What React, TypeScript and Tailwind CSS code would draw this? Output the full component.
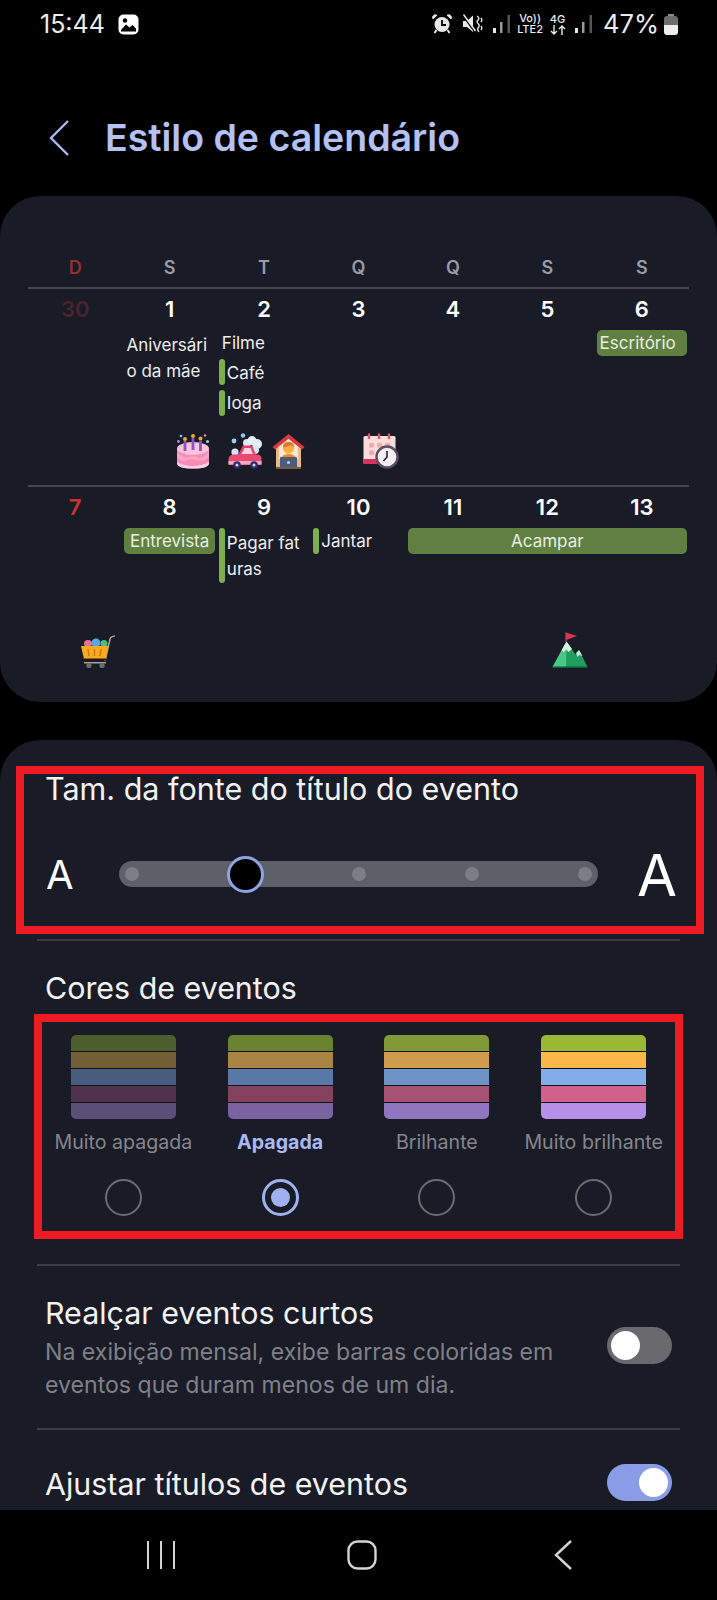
import React from "react";

function ImageIcon() {
  return (
    <svg width="21" height="21" viewBox="0 0 21 21">
      <rect x="0.5" y="0.5" width="20" height="20" rx="5" fill="#fff" />
      <path d="M3 16 L8 10.5 L11.5 13.5 L14.5 11 L18 14.5 V17.5 H3 Z" fill="#000" />
      <circle cx="7" cy="6.5" r="2.2" fill="#000" />
    </svg>
  );
}
function AlarmIcon() {
  return (
    <svg width="20" height="20" viewBox="0 0 20 20">
      <circle cx="10" cy="10.5" r="7.5" fill="#e8e8e8" />
      <path d="M10 6 V11 H14" stroke="#000" strokeWidth="1.8" fill="none" />
      <path d="M1 5 L5 1.2 L2.6 0.8 L0.6 2.6 Z M19 5 L15 1.2 L17.4 0.8 L19.4 2.6 Z" fill="#e8e8e8" stroke="#e8e8e8" />
      <path d="M4.5 16 L2.5 19 M15.5 16 L17.5 19" stroke="#e8e8e8" strokeWidth="2" />
    </svg>
  );
}
function MuteIcon() {
  return (
    <svg width="21" height="20" viewBox="0 0 21 20">
      <path d="M1 7 H5 L11 1.5 V18 L5 13 H1 Z" fill="#e8e8e8" />
      <path d="M1 1.5 L13 18" stroke="#000" strokeWidth="2" />
      <path d="M1.5 0.5 L13.5 17" stroke="#e8e8e8" strokeWidth="1.5" />
      <path d="M15 2 Q18 4 16 6 Q14 8 16.5 10 Q18 12 16 14 Q15 16 17 18 M19 4 Q20.5 6 19 8 M19 12 Q20.5 14 19 16" stroke="#e8e8e8" strokeWidth="1.4" fill="none" />
    </svg>
  );
}
function SignalIcon() {
  return (
    <svg width="18" height="20" viewBox="0 0 18 20">
      <rect x="0" y="14" width="3" height="5" fill="#e8e8e8" />
      <rect x="7" y="8" width="2.5" height="11" fill="#9a9a9a" />
      <rect x="14.5" y="1" width="2.5" height="18" fill="#555" />
    </svg>
  );
}
function ArrowsIcon() {
  return (
    <svg width="16" height="10" viewBox="0 0 16 10">
      <path d="M4 0 V9 M1 6 L4 9 L7 6 M12 10 V1 M9 4 L12 1 L15 4" stroke="#e8e8e8" strokeWidth="1.4" fill="none" />
    </svg>
  );
}
function BatteryIcon() {
  return (
    <svg width="14" height="21" viewBox="0 0 14 21">
      <rect x="4" y="0" width="6" height="3" fill="#8a8a8a" />
      <path d="M0 5 Q0 2 3 2 H11 Q14 2 14 5 V11 H0 Z" fill="#6d6d6d" />
      <path d="M0 11 H14 V18 Q14 21 11 21 H3 Q0 21 0 18 Z" fill="#eee" />
    </svg>
  );
}

function CakeEmoji() {
  return (
    <svg width="34" height="36" viewBox="0 0 34 36">
      <circle cx="9" cy="6" r="2" fill="#f5a623" />
      <circle cx="17" cy="3" r="2" fill="#f5a623" />
      <circle cx="24.5" cy="5.5" r="2" fill="#f5a623" />
      <circle cx="2.5" cy="8.5" r="1.4" fill="#a98be0" />
      <circle cx="31.5" cy="8.5" r="1.6" fill="#8fc6f0" />
      <circle cx="5" cy="3" r="1.3" fill="#8fc6f0" />
      <circle cx="29" cy="2.5" r="1.2" fill="#e58fc0" />
      <path d="M1 16 V30 Q1 35.5 17 35.5 Q33 35.5 33 30 V16 Z" fill="#f78cb6" />
      <ellipse cx="17" cy="15.5" rx="16" ry="6.5" fill="#fbc3d9" />
      <path d="M1 17 Q1 22 6 22.5 Q9 26 13 24 Q19 22 23 25 Q29 26 33 17 V24 Q27 29 21 27 Q14 25 9 28 Q4 28 1 24 Z" fill="#fba6c9" />
      <path d="M1 29 Q8 33 17 33 Q26 33 33 29 V30 Q33 35.5 17 35.5 Q1 35.5 1 30 Z" fill="#fcd2e2" />
      <path d="M9 8 V18 M17 5 V17 M24.5 7.5 V18" stroke="#8456c8" strokeWidth="2.8" />
    </svg>
  );
}
function CarEmoji() {
  return (
    <svg width="34" height="36" viewBox="0 0 34 36">
      <circle cx="6" cy="8" r="2.4" fill="#9ccbf0" />
      <circle cx="15" cy="2.5" r="2.2" fill="#8fc6f0" />
      <circle cx="19" cy="10" r="4" fill="#dbe8f6" />
      <circle cx="24" cy="7.5" r="4.5" fill="#e8eff7" />
      <circle cx="29" cy="11" r="5" fill="#e2ebf6" />
      <circle cx="27" cy="17" r="4" fill="#d6e6f5" />
      <circle cx="7" cy="19" r="3.6" fill="#d6e6f5" />
      <path d="M10 22 L15 12.5 H24 L28 22 Z" fill="#e6406a" />
      <path d="M13.5 21 L16.5 15 H22.5 L25 21 Z" fill="#f7d5df" />
      <path d="M0.5 32 V26 Q1 22 5 21.5 H30 Q33.5 22 33.5 26 V32 Z" fill="#ea4a72" />
      <rect x="0.5" y="28" width="33" height="3.5" fill="#f7a8bd" />
      <circle cx="9" cy="32" r="3.8" fill="#2d2f6e" />
      <circle cx="26" cy="32" r="3.8" fill="#2d2f6e" />
      <circle cx="9" cy="32" r="1.5" fill="#cfd2ea" />
      <circle cx="26" cy="32" r="1.5" fill="#cfd2ea" />
    </svg>
  );
}
function HouseEmoji() {
  return (
    <svg width="33" height="36" viewBox="0 0 33 36">
      <rect x="4" y="12" width="25" height="23" fill="#e9b989" />
      <path d="M7 13 L16.5 5.5 L26 13 V26 H7 Z" fill="#fbe6cf" />
      <path d="M0.5 14 L16.5 1 L32.5 14 L30 16.5 L16.5 5.5 L3 16.5 Z" fill="#d8393f" />
      <circle cx="16.5" cy="15" r="5.5" fill="#f6b042" />
      <path d="M11 14.5 Q11 8.5 17 9 Q22.5 9 22 14.5 L19.5 12 Q15 13.5 11 14.5 Z" fill="#e4742a" />
      <path d="M8.5 26 Q10.5 21 16.5 21 Q22.5 21 24.5 26 Z" fill="#ef8b2f" />
      <rect x="8" y="24" width="17" height="11" rx="1" fill="#4c5c7c" />
      <rect x="4" y="34" width="25" height="2" fill="#7c5a3c" />
      <circle cx="16.5" cy="29.5" r="1.6" fill="#c5cde0" />
    </svg>
  );
}
function CalendarEmoji() {
  return (
    <svg width="36" height="36" viewBox="0 0 36 36">
      <rect x="0.5" y="3" width="32" height="28" rx="1.5" fill="#fbdcdc" />
      <rect x="0.5" y="26" width="32" height="5" fill="#d8335e" />
      <path d="M6 0.5 V6 M16 0.5 V6 M26 0.5 V6" stroke="#d8596e" strokeWidth="2.4" />
      <path d="M6 10 h5 v4.5 h-5 z M14 10 h5 v4.5 h-5 z M22 10 h5 v4.5 h-5 z M6 17.5 h5 v4.5 h-5 z M14 17.5 h5 v4.5 h-5 z" fill="#f4a9a9" />
      <circle cx="24" cy="24" r="10.5" fill="#f3eef0" stroke="#5a4c62" strokeWidth="2.4" />
      <path d="M24 18 V24 L20.5 28" stroke="#2c2434" strokeWidth="1.6" fill="none" />
    </svg>
  );
}
function CartEmoji() {
  return (
    <svg width="36" height="34" viewBox="0 0 36 34">
      <path d="M25 26 L30 4 Q30.5 1.5 35 1" stroke="#a8a09a" strokeWidth="1.6" fill="none" />
      <ellipse cx="8" cy="8.5" rx="4" ry="3.5" fill="#ef6f96" />
      <ellipse cx="16" cy="8" rx="4.5" ry="4.5" fill="#58a6e6" />
      <ellipse cx="24" cy="8.5" rx="3.5" ry="3.5" fill="#4fbf78" />
      <path d="M1 11 H28.5 L26 24 H4 Z" fill="#fba91e" />
      <path d="M8 14 L9 21 M14.5 14 V21 M21 14 L20 21" stroke="#c77d10" strokeWidth="1.5" />
      <rect x="4" y="23.5" width="22" height="2" fill="#221a10" />
      <rect x="4" y="27" width="22" height="1.5" fill="#a8a09a" />
      <circle cx="9" cy="30.5" r="2.6" fill="#6d6a66" />
      <circle cx="22" cy="30.5" r="2.6" fill="#6d6a66" />
    </svg>
  );
}
function MountainEmoji() {
  return (
    <svg width="36" height="36" viewBox="0 0 36 36">
      <path d="M14 0.5 V10" stroke="#a53232" strokeWidth="1.6" />
      <path d="M14 0.5 L25 4 L14 8 Z" fill="#d8384e" />
      <path d="M0.5 35 L14.5 9.5 L24 23 L27 18 L35.5 35 Z" fill="#1f9e5f" />
      <path d="M0.5 35 L14.5 9.5 L14 35 Z" fill="#49c985" />
      <path d="M9.5 18.5 L14.5 9.5 L20 17 L16.5 20 L14 17.5 L12 20 Z" fill="#d8f3e0" />
      <path d="M24 21 L27 18 L30.5 24 L27.5 23 L25.5 25 Z" fill="#b9ecc9" />
      <rect x="0.5" y="34.5" width="35" height="1.5" fill="#0d5b38" />
    </svg>
  );
}

function Bar({ className }: { className: string }) {
  return <div className={`w-[6px] rounded-[3px] bg-[#7fae4d] ${className}`} />;
}

const weekdays = [
  ["D", "text-[#8f3232]"],
  ["S", "text-[#9a9ba1]"],
  ["T", "text-[#9a9ba1]"],
  ["Q", "text-[#9a9ba1]"],
  ["Q", "text-[#9a9ba1]"],
  ["S", "text-[#9a9ba1]"],
  ["S", "text-[#9a9ba1]"],
];

function DateRow({ days }: { days: [string, string][] }) {
  return (
    <div className="grid h-[42px] grid-cols-7 border-t-2 border-[#46474e] text-[22px] font-semibold leading-[40px]">
      {days.map(([d, c]) => (
        <div key={d} className={`text-center ${c}`}>
          {d}
        </div>
      ))}
    </div>
  );
}

const palettes = [
  { label: "Muito apagada", colors: ["#4c5d2e", "#746037", "#465d7e", "#50324a", "#5b4e78"], on: false },
  { label: "Apagada", colors: ["#6a832f", "#a98443", "#5878a6", "#84425f", "#7b62a0"], on: true },
  { label: "Brilhante", colors: ["#7f9a36", "#cf9b4c", "#6f93c5", "#a65273", "#8f76bf"], on: false },
  { label: "Muito brilhante", colors: ["#99b834", "#fdb64a", "#83acea", "#d0618b", "#b58fe8"], on: false },
];

export default function App() {
  return (
    <div className="flex h-[1600px] w-full flex-col overflow-hidden bg-black font-['Inter',sans-serif] text-white">
      {/* status bar */}
      <div className="flex h-[48px] shrink-0 items-center pl-[40px] pr-[39px] text-[#ececec]">
        <span className="text-[25px] leading-none">15:44</span>
        <span className="ml-[13px]"><ImageIcon /></span>
        <div className="ml-auto flex items-center">
          <AlarmIcon />
          <span className="ml-[10px]"><MuteIcon /></span>
          <span className="ml-[10px]"><SignalIcon /></span>
          <div className="ml-[5px] flex w-[28px] flex-col items-center text-[11px] font-medium leading-[11px]">
            <span>Vo))</span>
            <span>LTE2</span>
          </div>
          <div className="ml-[5px] flex w-[17px] flex-col items-center text-[11px] font-medium leading-[11px]">
            <span>4G</span>
            <ArrowsIcon />
          </div>
          <span className="ml-[9px]"><SignalIcon /></span>
          <span className="ml-[10px] text-[25.5px] leading-none">47%</span>
          <span className="ml-[5px]"><BatteryIcon /></span>
        </div>
      </div>

      {/* header */}
      <div className="flex h-[148px] shrink-0 items-center pl-[49px] pt-[32px]">
        <svg width="20" height="36" viewBox="0 0 20 36">
          <path d="M19 1 L2 18 L19 35" stroke="#a9b8f5" strokeWidth="2.4" fill="none" />
        </svg>
        <h1 className="ml-[36px] text-[37.5px] font-semibold leading-none text-[#b3c1f5]">Estilo de calendário</h1>
      </div>

      {/* calendar preview */}
      <div className="h-[506px] shrink-0 rounded-[40px] bg-[#191b27] px-[28px] pt-[52px]">
        <div className="grid h-[39px] grid-cols-7 pt-[2px] text-[18px] font-semibold leading-[36px]">
          {weekdays.map(([d, c], i) => (
            <div key={i} className={`text-center ${c}`}>{d}</div>
          ))}
        </div>

        <DateRow
          days={[
            ["30", "text-[#4a2429]"],
            ["1", "text-white"],
            ["2", "text-white"],
            ["3", "text-white"],
            ["4", "text-white"],
            ["5", "text-white"],
            ["6", "text-white"],
          ]}
        />
        <div className="grid h-[104px] grid-cols-7 pt-[1px] text-[17px] leading-[26px] text-[#eeeeee]">
          <div />
          <div className="pl-[4px] pt-[2px]">
            Aniversári
            <br />o da mãe
          </div>
          <div className="pl-[2px]">
            <div className="pl-[3px]">Filme</div>
            <div className="mt-[3px] flex gap-[2px]">
              <Bar className="h-[26px]" />
              <span className="pt-[1px]">Café</span>
            </div>
            <div className="mt-[4px] flex gap-[2px]">
              <Bar className="h-[26px]" />
              <span>Ioga</span>
            </div>
          </div>
          <div />
          <div />
          <div />
          <div className="mx-[2px] h-[26px] rounded-[5px] bg-[#5f8040] pl-[3px] text-[#e9eee2]">Escritório</div>
        </div>
        <div className="grid h-[36px] grid-cols-7">
          <div />
          <div className="flex justify-end pr-[7px]"><CakeEmoji /></div>
          <div className="flex justify-end gap-[10px] pr-[6px]"><CarEmoji /><HouseEmoji /></div>
          <div className="flex justify-end pr-[7px]"><CalendarEmoji /></div>
        </div>
        <div className="h-[16px]" />

        <DateRow
          days={[
            ["7", "text-[#c9342f]"],
            ["8", "text-white"],
            ["9", "text-white"],
            ["10", "text-white"],
            ["11", "text-white"],
            ["12", "text-white"],
            ["13", "text-white"],
          ]}
        />
        <div className="grid h-[105px] grid-cols-7 pt-[1px] text-[17px] leading-[26px] text-[#eeeeee]">
          <div />
          <div className="mx-[2px] h-[26px] rounded-[5px] bg-[#5f8040] text-center text-[#e9eee2]">Entrevista</div>
          <div className="flex gap-[2px] pl-[2px]">
            <Bar className="h-[55px]" />
            <span className="pt-[2px]">
              Pagar fat
              <br />
              uras
            </span>
          </div>
          <div className="flex gap-[2px] pl-[2px]">
            <Bar className="h-[26px]" />
            <span>Jantar</span>
          </div>
          <div className="col-span-3 mx-[2px] h-[26px] rounded-[5px] bg-[#5f8040] text-center text-[#e9eee2]">Acampar</div>
        </div>
        <div className="grid h-[36px] grid-cols-7">
          <div className="flex justify-end pr-[6px] pt-[3px]"><CartEmoji /></div>
          <div />
          <div />
          <div />
          <div />
          <div className="flex justify-end pr-[7px]"><MountainEmoji /></div>
        </div>
      </div>

      {/* settings */}
      <div className="mt-[38px] flex-1 overflow-hidden rounded-t-[40px] bg-[#191b27] pt-[26px]">
        <div className="ml-[16px] mr-[13px] h-[168px] border-8 border-[#ed1c24] pl-[22px]">
          <div className="-ml-[1px] h-[30px] whitespace-nowrap text-[30.5px] leading-[30px] text-[#f2f2f2]">Tam. da fonte do título do evento</div>
          <div className="mt-[40px] flex h-[60px] items-center">
            <span className="w-[73px] pt-[2px] text-[40px] leading-none">A</span>
            <div className="flex h-[26px] w-[479px] items-center justify-between rounded-full bg-[#5d5f69] px-[6px]">
              <div className="h-[14px] w-[14px] rounded-full bg-[#7d7e85]" />
              <div className="flex h-[14px] w-[14px] items-center justify-center">
                <div className="h-[37px] w-[37px] shrink-0 rounded-full border-[3px] border-[#8fa3e0] bg-black" />
              </div>
              <div className="h-[14px] w-[14px] rounded-full bg-[#7d7e85]" />
              <div className="h-[14px] w-[14px] rounded-full bg-[#7d7e85]" />
              <div className="h-[14px] w-[14px] rounded-full bg-[#7d7e85]" />
            </div>
            <span className="ml-[39px] pt-[2px] text-[58px] leading-none">A</span>
          </div>
        </div>

        <div className="mx-[37px] mt-[5px] h-[2px] bg-[#3a3b44]" />

        <div className="ml-[45px] mt-[32px] h-[30px] text-[30.4px] leading-[30px] text-[#f2f2f2]">Cores de eventos</div>

        <div className="ml-[34px] mt-[11px] h-[225px] w-[649px] border-8 border-[#ed1c24] px-[3px] pt-[13px]">
          <div className="grid grid-cols-4">
            {palettes.map((p) => (
              <div key={p.label} className="flex flex-col items-center">
                <div className="flex w-[105px] flex-col gap-[1px] overflow-hidden rounded-[5px] bg-[#11121a]">
                  {p.colors.map((c) => (
                    <div key={c} className="h-[16px]" style={{ backgroundColor: c }} />
                  ))}
                </div>
                <div
                  className={`mt-[11px] h-[24px] whitespace-nowrap text-[19.6px] leading-[24px] ${
                    p.on ? "font-bold text-[#a9b9f2]" : "text-[#85868c]"
                  }`}
                >
                  {p.label}
                </div>
                {p.on ? (
                  <div className="mt-[25px] flex h-[37px] w-[37px] items-center justify-center rounded-full border-[3px] border-[#9fb1ee]">
                    <div className="h-[19px] w-[19px] rounded-full bg-[#9fb1ee]" />
                  </div>
                ) : (
                  <div className="mt-[25px] h-[37px] w-[37px] rounded-full border-2 border-[#6b6b70]" />
                )}
              </div>
            ))}
          </div>
        </div>

        <div className="mx-[37px] mt-[25px] h-[2px] bg-[#3a3b44]" />

        <div className="flex items-start pl-[45px] pr-[45px] pt-[30px]">
          <div className="w-[545px]">
            <div className="h-[34px] text-[30.4px] leading-[34px] text-[#f2f2f2]">Realçar eventos curtos</div>
            <div className="mt-[6px] text-[23.1px] leading-[33px] text-[#808188]">
              Na exibição mensal, exibe barras coloridas em
              <br />
              eventos que duram menos de um dia.
            </div>
          </div>
          <div className="ml-auto mt-[31px] flex h-[37px] w-[65px] items-center justify-start rounded-full bg-[#69696e] px-[4px]">
            <div className="h-[29px] w-[29px] rounded-full bg-white" />
          </div>
        </div>

        <div className="mx-[37px] mt-[26px] h-[2px] bg-[#3a3b44]" />

        <div className="flex items-start pl-[45px] pr-[45px] pt-[34px]">
          <div className="mt-[3px] text-[30.4px] leading-[34px] text-[#f2f2f2]">Ajustar títulos de eventos</div>
          <div className="ml-auto flex h-[37px] w-[65px] items-center justify-end rounded-full bg-[#8b9ce6] px-[4px]">
            <div className="h-[29px] w-[29px] rounded-full bg-white" />
          </div>
        </div>
      </div>

      {/* nav bar */}
      <div className="flex h-[90px] shrink-0 items-center justify-center gap-[171px] bg-black pl-[6px]">
        <svg width="30" height="30" viewBox="0 0 30 30">
          <path d="M2 1 V29 M15 1 V29 M28 1 V29" stroke="#d4d4d4" strokeWidth="2" />
        </svg>
        <svg width="30" height="30" viewBox="0 0 30 30">
          <rect x="1.5" y="1.5" width="27" height="27" rx="9" fill="none" stroke="#d4d4d4" strokeWidth="2.4" />
        </svg>
        <svg width="30" height="30" viewBox="0 0 30 30">
          <path d="M23 1 L8 15 L23 29" fill="none" stroke="#d4d4d4" strokeWidth="2.4" />
        </svg>
      </div>
    </div>
  );
}
